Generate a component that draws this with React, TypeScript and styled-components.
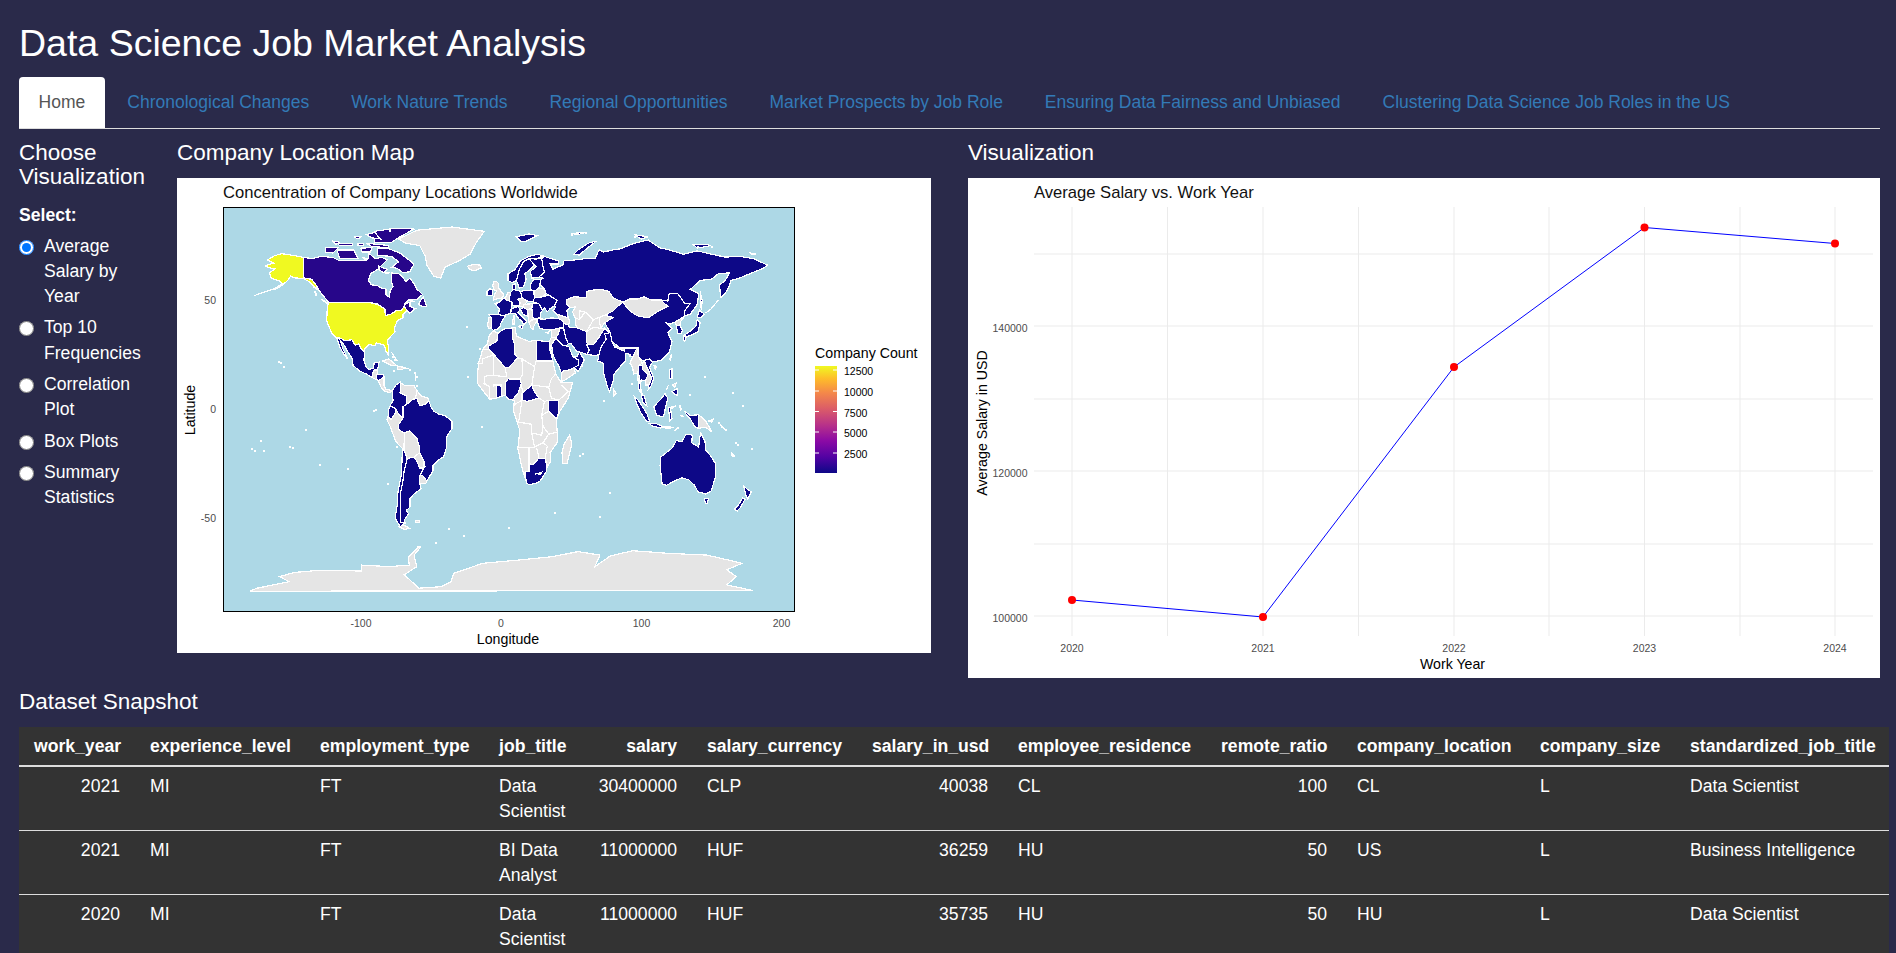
import React from "react";
import styled, { createGlobalStyle } from "styled-components";

const GlobalStyle = createGlobalStyle`
  html, body {
    margin: 0;
    height: 953px;
    overflow: hidden;
    background: #2a2a4a;
    color: #fff;
    font-family: "Liberation Sans", Arial, sans-serif;
    font-size: 17.6px;
    line-height: 25.14px;
  }
`;

const Page = styled.div`
  padding: 0 16px 0 19px;
`;

const Title = styled.h1`
  margin: 0;
  padding: 23px 0 13px;
  font-size: 37.5px;
  font-weight: 400;
  line-height: 41px;
`;

const TabBar = styled.ul`
  display: flex;
  gap: 2.8px;
  margin: 0;
  padding: 0;
  list-style: none;
  border-bottom: 1px solid #ddd;
`;

const Tab = styled.li<{ $active?: boolean }>`
  height: 51px;
  padding: 0 19.6px;
  font-size: 17.5px;
  line-height: 50px;
  border-radius: 4px 4px 0 0;
  color: ${({ $active }) => ($active ? "#555" : "#337ab7")};
  background: ${({ $active }) => ($active ? "#fff" : "transparent")};
`;

const Columns = styled.div`
  display: grid;
  grid-template-columns: 128px 761px 912px;
  gap: 30px;
  margin-top: 11px;
`;

const Heading = styled.h3`
  margin: 0 0 13px;
  padding-top: 0.5px;
  height: 24.25px;
  font-size: 22.5px;
  font-weight: 400;
  line-height: 24.75px;
`;

const SideHeading = styled(Heading)`
  height: auto;
  margin-bottom: 12.5px;
`;

const Sidebar = styled.div`
  display: flex;
  flex-direction: column;
`;

const SelectLabel = styled.div`
  font-weight: 700;
  margin-bottom: 6px;
`;

const RadioList = styled.div`
  display: flex;
  flex-direction: column;
`;

const RadioRow = styled.label`
  display: flex;
  align-items: flex-start;
  gap: 10px;
  margin-bottom: 6.4px;
`;

const RadioInput = styled.input`
  flex: none;
  width: 15px;
  height: 15px;
  margin: 6px 0 0;
`;

const PlotFrame = styled.svg`
  display: block;
  background: #fff;
`;

const PlotTitle = styled.text`
  font-size: 16.6px;
  fill: #111;
`;

const AxisTitle = styled.text`
  font-size: 14.2px;
  fill: #000;
`;

const TickLabel = styled.text`
  font-size: 10.5px;
  fill: #4d4d4d;
`;

const LegendLabel = styled.text`
  font-size: 10.5px;
  fill: #000;
`;

const Land = styled.polygon<{ $fill: string }>`
  fill: ${({ $fill }) => $fill};
  stroke: #fff;
  stroke-width: 1.2;
`;

const BorderLine = styled.polyline`
  fill: none;
  stroke: #fff;
  stroke-width: 1.2;
`;

const MapGroup = styled.g`
  shape-rendering: crispEdges;
`;

const GridLine = styled.line`
  stroke: #ebebeb;
  stroke-width: 1;
`;

const Snapshot = styled.section`
  margin-top: 11.5px;
`;

const DataTable = styled.table`
  width: 1870px;
  table-layout: fixed;
  border-collapse: collapse;
  background: #333;
`;

const HeadCell = styled.th<{ $right?: boolean }>`
  padding: 7px 15px 6px;
  font-weight: 700;
  white-space: nowrap;
  text-align: ${({ $right }) => ($right ? "right" : "left")};
  border-bottom: 2px solid #ddd;
`;

const BodyCell = styled.td<{ $right?: boolean }>`
  padding: 6.4px 15px;
  vertical-align: top;
  text-align: ${({ $right }) => ($right ? "right" : "left")};
  border-bottom: 1px solid #ddd;
`;

const NAVY = "#0d0887";
const CANADA = "#27068a";
const YELLOW = "#f0f921";
const GREY = "#e5e5e5";

// country outlines, as lon,lat pairs
const GREY_LAND = [
  "-73,78 -60,82 -35,83.5 -12,81.5 -18,76 -22,71 -30,68 -40,65 -43,60 -48,61 -53,66 -54,70 -58,75 -68,76",
  "-24,65.5 -20,66.3 -15,66 -14,64.7 -19,63.4 -22.5,64",
  "-179.3,-83.6 -174,-82.2 -151,-79.2 -158,-76.9 -147.6,-75 -130,-74 -99.5,-74.3 -99.5,-71.6 -80,-72.3 -65.5,-71.6 -66,-68 -60,-64 -57,-63 -62,-67 -61,-70 -60,-72.3 -69,-76 -58.6,-82.2 -42.8,-81.5 -35.7,-79.2 -33.8,-75.4 -13,-70.8 12,-69.3 37,-67.7 55,-65.4 70.6,-67 67,-72.3 78,-67.4 94,-65 118.8,-66.2 147,-67 172,-70.8 161,-73.8 168,-76.9 161,-80.7 180,-83.3",
  "-6,35.7 -2,35 3,36.9 10,37.3 11,33.5 15,32.3 20,31 25,31.5 32,31 34.5,31 37,22 39,16 43,12 51,12 48,5 42,-1 39.5,-5 40.5,-15 35,-20 35.5,-24 32.8,-26.8 28,-33 20,-34.8 18.3,-34 15,-27 12,-18 13.5,-10 9,-1 9.5,4 5.5,4.5 3,6.4 -3,5 -8,4.5 -13,8.5 -17,12 -17,15 -16,21 -13,27.5 -9.5,30 -9,33",
  "49,-12 50.5,-16 47,-25 44,-25 43.5,-20 45,-16",
  "-92,14.5 -91,17.8 -88,18 -88,16 -83.5,15 -83.5,11 -82,9 -77.5,8.5 -79.5,7.5 -83,8.2 -85.5,10 -87.5,13",
  "-72,12 -68,10.6 -62,10.7 -60,8.5 -61,5 -64,4 -67.5,2 -67.5,6 -72,7.5",
  "-60,8.5 -57,6 -52,5 -51.5,4 -54,2.2 -58,1.5 -60,5 -61,5",
  "-80.5,-3.3 -78.5,-4.8 -75.5,-2 -75,0 -73,-2.4 -70,-4.2 -73,-7 -73,-9.5 -69,-11 -69,-15 -70,-18.3 -75,-15 -79,-8 -81.3,-5",
  "-69,-11 -65,-10 -60,-13.5 -58,-18 -58,-20 -62,-22 -67,-22.8 -69,-19 -69,-15",
  "-62,-22 -58,-20 -55,-24 -55,-27 -58,-27 -60,-24",
  "-58,-34 -53.5,-34 -53,-33 -56,-30.5 -58,-30.5",
  "-70,-53 -65,-54.8 -69,-55.2 -73,-54",
  "-61,-51.3 -58,-51.3 -58,-52 -61,-52",
  "-84.5,22 -80,23 -74.5,20 -78,20",
  "-74,19.8 -68.5,18.8 -71,18 -74,18",
  "-5.5,50 -3,50.5 1.3,51 1.7,52.7 0,54 -2,56 -2,57.7 -3.5,58.6 -5.2,58.5 -6,56.5 -5,54.8 -3,54 -4.5,53 -5,51.7",
  "-7,37.2 -7,42 -8.8,42 -9.5,38.7 -8.9,37",
  "2.5,51 4,52 5,53.4 7,53.5 6,51 6.2,49.5 4,50",
  "12,50.3 15,51 19,49.5 17,48 16,47 9.5,47 13,47.5 13.8,48.7",
  "16,48 22.5,48.3 22,46 18.5,45.7 16,46.5",
  "8.2,41 9.7,41 9.6,39 8.4,39",
  "24,51 23.5,53.9 27,55.5 31,55 32,53 30,51.5",
  "19,45.5 22,46 22.5,44 23,41.3 20,40 19.5,42",
  "20,40 23,41 26,41 23.5,38 23,36.5 21.5,37",
  "47,48 46.5,50 52,51.5 61,51 61,54 70,55 77,54 80,51 87,49 83,47 80,45 74,43 70,42 66,41 60,44.5 56,45 56,41 53,41.8 51,44.5 53,46.8 49,46.5",
  "53,41.8 56,41 56,45 60,44.5 66,41 70,42 74,43 80,42 74,39.5 71,37 66,37.5 61,35.5 54,37.3 53,39",
  "87,49 92,50.5 98,50.5 102,51.5 107,50 114,50 119,47 112,44.8 105,41.8 97,42.8 91,45.5",
  "36,36.2 42,37.2 41,34.5 39,32.5 36,33",
  "34.5,31 36,33 39,32.5 36,29.5 35,29",
  "40,43.5 48,41.8 49,40 48,38.5 44.5,39.5 41.5,41.5",
  "43,16.7 45,17.5 49,18 52,19 53,16.5 45,13 43,12.7",
  "61,35.5 66,37.5 71,37 74,37 70,33 66,29.5 61,29.5 61,31",
  "80,29 88,28 88,26.5 81,28.5",
  "80,9.5 82,7 80.5,6",
  "92,21 94,24 97,28 98,24 101,21 98,20 97.8,17 99,14 98,10 97.5,16.5 94.5,16 94,19",
  "101,21 102,22.3 105,18 107.5,14 105.5,11 103,11 103,13 105,16 101,18",
  "124.5,40 131,42.7 128,40 127.5,38.5 125,38",
  "141,-2.6 146,-5.5 150.5,-10.5 146,-8.5 143,-8.5 141,-9",
  "120.5,23 121.5,25 121,22",
  "164,-20 167,-22 165,-21.5",
  "109,20 111,19.5 110,18.2",
  "32.5,35 34.5,35.5 33.5,34.6",
  "8.6,43 9.5,43 9.3,41.5",
  "117.5,8.5 119.5,11 118.5,9.5",
  "122,11 125,12 124,10",
  "124,-10 127,-8.5 125,-9",
  "115,-8.2 119,-8.2 123,-8.4 119,-9",
  "127.5,2 128.5,0 128,-1",
  "128,-3 130.5,-3.5 129,-3.5",
  "148,-5.5 152,-4.5 150,-6",
  "155,-6 157,-7.5 160,-9.5 158,-8",
];

const NAVY_LAND = [
  "-117.2,32.6 -114.8,32.5 -111,31.3 -106.5,31.8 -104,29.3 -101.5,29.8 -99.5,27.5 -97.2,26 -97.8,22.5 -96,19 -94,18.2 -91,18.7 -90.5,21 -87,21.5 -88,18 -91,17.8 -92,14.5 -96,16 -101,17.5 -105.5,20 -106,23 -109,26 -112.5,30 -114.5,31.2 -113,28 -110,24 -109.5,23 -112,25 -115,28.5",
  "-89,15.5 -88,15.9 -84,15.8 -83.3,15 -85,14 -87.5,13 -89,14",
  "-77.5,8.5 -75,11 -71.5,12.4 -72,7.5 -67.5,6 -67.5,2 -70,1 -70,-4.2 -73,-2.4 -75,0 -79,1.5 -77,4",
  "-79,1.5 -75,0 -75.5,-2 -78.5,-4.8 -80.5,-3.3 -80,0",
  "-70,-4.2 -70,1 -67.5,2 -64,4 -60,5 -58,1.5 -54,2.2 -51.5,4 -50,1 -48,-1 -44,-2.5 -40,-3 -35,-5.5 -35,-9 -39,-13 -39,-18 -41,-22 -45,-23.5 -48.5,-26 -48.5,-28.5 -53,-33 -56,-30.5 -58,-30.5 -55,-27 -55,-24 -58,-20 -58,-18 -60,-13.5 -65,-10 -69,-11 -73,-9.5 -73,-7",
  "-67,-22.8 -62,-22 -60,-24 -58,-27 -55,-27 -54,-26 -58,-30.5 -58,-34 -57,-36.5 -62,-39 -65,-41 -65,-45 -67.5,-46.5 -66,-48 -69,-51 -68.5,-52.3 -72,-52 -72,-49 -71.5,-44 -71.5,-38 -70,-33 -69,-28",
  "-69,-19 -70.3,-18.3 -71,-30 -73.5,-38 -74,-44 -75.5,-50 -72,-54 -68.5,-52.3 -72,-52 -72,-49 -71.5,-44 -71.5,-38 -70,-33 -69,-28 -67,-22.8",
  "11,79 20,80.3 26,79.5 18,77 14,77",
  "52,71 55,73 62,76 68,77 60,73 56,70.6",
  "5,59 5,62 10,64 14,68 20,70 26,71 31,70 28,69.7 25,68.8 20,69 16,67.5 13,64 12,61 11,59 8,58",
  "11,59 12,61 13,64 16,67.5 20,69 24,66 21,64 17,62 18,59.5 16,56 13,55.5",
  "20,69 25,68.8 29,69 30,65 31,62.7 27,60.5 22,60 21,63 25,65.5 24,66",
  "-10,52 -10,54 -8,55.3 -6,54.5 -6,52.2",
  "-4.5,48.5 -1.5,48.7 1.5,50.9 4,50 8,49 7.5,47.5 7,44 3.5,43.2 3,42.5 -1.8,43.4 -1.2,46",
  "-9,43.5 -1.8,43.4 3,42.5 0,39.5 -0.5,38 -2,36.8 -5.5,36 -7,37.2 -7,42",
  "6,51 7,53.5 8.8,54.9 10,54.7 14,54 15,51 12,50.3 13.8,48.7 13,47.5 8,47.6 8,49 6.2,49.5",
  "8.2,55 8.5,57 10.5,57.7 10.5,55",
  "14,54 19,54.5 23,54.3 24,51 22.7,49.2 19,49.5 15,51",
  "7,44 7.5,46 12,47 13.7,45.7 12.3,44.3 16,41.8 18.5,40 16.5,39 16,38 15.5,40 12.5,41.5 10,44",
  "12.5,38 15.5,38.2 15,36.8",
  "22.7,49.2 24,51 30,51.5 34,52.3 40,49.8 38,47.2 35,46 33,44.6 31,46.5 29.5,45.3 27,48.3",
  "21,55.2 21,57.4 23.5,59.3 28,59.4 27.8,57 27,55.5 23.5,53.9",
  "22,46 22.5,48.3 27,48.3 29.5,45.3 28,43.5 28,41.8 23,41.3 22.5,44",
  "13.7,45.7 16,46.5 19,45.5 19,42.6 16,43.3",
  "26,40 26.5,42 28,41.3 31,41.2 36,41.8 41.5,41.5 44.8,39.8 44.5,37.2 42,37.2 36,36.2 30.5,36.5 27.5,37",
  "28,59.4 27.8,57 31,55 32,53 34,52.3 40,49.8 38,47.2 39,46.8 37,45 40,43.5 48,41.8 47,45 49,46.5 47,48 46.5,50 52,51.5 61,51 61,54 70,55 77,54 80,51 87,49 92,50.5 98,50.5 102,51.5 107,50 114,50 119,49.5 120,53 126,53 131,48.5 135,48.5 131,45 131,42.7 135,43.5 140,48 141,53 135,54.8 142,59 150,59.5 155,62 163,62.5 160,59 156,57 156.5,51 160,53 162.5,56 164,59 170,60 179,62.5 187,64.5 190,66 180,69 170,70 160,69.7 150,71 140,72.5 130,71 120,73 113,74 105,77.5 95,76 85,73.5 80,73 73,72 70,73 67,69 60,69 55,68.5 45,68 44,66 40,65 37,64 35,66.5 41,66.5 41,68 33,69.5 31,70 29,69 30,65 31,62.7 27,60.5 30,60",
  "142,54 143.5,50 143,46 142,47 142,52",
  "137,75.5 145,75.5 150,75 140,73.8",
  "95,80 105,79 100,78",
  "50,80.5 60,81 55,80",
  "178,71.5 182,71 179,70.8",
  "74,39.5 80,42 74,43 80,45 83,47 87,49 91,45.5 97,42.8 105,41.8 112,44.8 119,47 114,50 119,49.5 120,53 126,53 131,48.5 135,48.5 131,45 131,42.7 124.5,40 121,39 118,39.5 122,37 119,35 122,31 120,26 114,22.3 108,21.5 106,23 102,21.5 98,24 98,28 92,28 85,28 79,31 78,35",
  "125,38 127.5,38.5 129.5,36 128.5,34.7 126.3,34.5",
  "131,34 135,35.7 139,38 140,41 142,39.5 140.5,35.5 136,34 132,33",
  "140,42 141.5,45.5 145,43.5 143,42",
  "130,33.5 132,33 131,31 130,31.5",
  "44.5,39.5 48,38.5 49,37.5 54,37.3 61,35.5 61,31 63,27 61.5,25 57,26 54,26.5 50,30 48,30 46,33 45,36",
  "42,37.2 44.5,37.2 46,33 48,30 46.5,29 44,29.2 39,32.5 41,34.5",
  "36,29.5 39,32.5 44,29.2 46.5,29 48.5,28.5 50,26 51.5,24 55,22.5 55,20 52,19 49,18 45,17.5 43,16.7 41,20 39,22 37,25",
  "51.5,24 54,24 56,26 59.5,22.5 55,17 52,19 55,20 55,22.5",
  "61,29.5 66,29.5 70,33 74,37 77,35 75,32 71,28 70,25 67,24.5 61.5,25 63,27",
  "74,34.5 78,35 79,31 81,28.5 88,26.5 88,28 92,28 97,28 94,24 92,24 92,25 89,25.5 89,22 87,21 80,15.5 80,13 77.5,8 76,10 73,17 72.8,21 69,22 70,25 71,28 75,32",
  "102,22.3 106,23 108,21.5 106,19 109,14 107,10.5 105,9 105.5,11 107.5,14 105,18",
  "98,20 101,20 101,18 105,16 103,13 101,13 100,13.5 99.5,11 100,8 101,6.5 99,8 98,10 99,14 97.8,17",
  "100.2,6.5 102,6.3 103.5,3 104,1.4 101,3",
  "109,1 111,2.5 114,4.5 117,7 119,5 117.5,1 116,-3.5 111,-3 109.5,0",
  "95.3,5.5 98,4 104,-2 106,-5.8 104,-5.8 100,-2 97,2",
  "105.5,-6.5 110,-6.5 114.5,-7.8 114,-8.7 108,-7.8",
  "119.5,0.5 125,1.5 121,0 122,-4.5 120.5,-5.5",
  "120,18 122,18.5 122,14 120.3,14",
  "122,8 126,9.5 126,6 123.5,7",
  "131,-1 135,-3 141,-2.6 141,-9 138,-8 135,-4.5 132.5,-3",
  "114,-22 113.5,-26 115,-34.5 118,-35 124,-33 129,-31.5 134,-32.5 138,-35 140.5,-38 146,-39 150,-37.5 153,-31 153,-25 149,-21 146,-19 145.5,-15 142.5,-11 141.5,-14 141,-17.5 136,-15.5 136.5,-12 132,-11.5 129,-15 125,-14.5 122,-18 117,-20.5",
  "145,-41 148,-41 147,-43.5 146,-43.5",
  "166.5,-46 168.5,-46.8 171,-45 174,-41.5 172.5,-40.7 170,-43.5",
  "173,-35 175,-36.5 178.5,-38 176,-41.5 174.7,-39.5",
  "-2,35 3,36.9 8.5,37 8,33 9.5,30 10,25 12,23.5 5.5,19 3,19 -5,25 -8.7,27.5 -8.7,29 -3,31",
  "25,31.5 32,31 34.5,31 34.5,28 37,22 25,22",
  "3,6.4 3,12 5,13.8 13.5,13.7 14.5,11.5 12,7 8.5,4.5 5.5,4.5",
  "-3,5 -3,11 0,11 0.5,6",
  "14.5,7 15,4 19,3.5 27,5 23,9 22,11 15.5,7.5",
  "34,4 41,4 41,-1.7 39.5,-4.6 34,-1",
  "17,-29 20,-28.5 20,-25 23,-25.5 27,-22.5 31.5,-22.5 32.8,-26.8 32.5,-28.5 28,-33 25,-34 20,-34.8 18.3,-34",
];

const CANADA_LAND = [
  "-141,69.6 -135,69 -128,70 -120,69.5 -115,68 -108,68 -100,68 -95,68.5 -94,71.5 -90,69 -85,69.5 -81,68.5 -85,66 -87,64.5 -93,62 -94.5,59 -92.5,57 -88,56.5 -85,55.3 -82,55 -82,52.5 -79.5,51.2 -79,54.5 -77,56 -78,58.5 -78,62.4 -73,62 -70,60.5 -68,58.5 -65,60 -62,57.5 -60,55 -56,52.5 -60,50.2 -66,50 -69,48 -65,49 -65,47 -61,46 -65,44 -67,45 -69,47.3 -71,45.2 -75,45 -79,43.3 -83,42.2 -82.5,45.5 -88,48.2 -95,49 -123,49 -125,50.5 -130,54.5 -130,55 -134,58.5 -137,59 -141,60.2",
  "-80,73.5 -72,71.5 -67,69 -62,66.5 -65,63 -70,62.5 -74,64.5 -78,65 -73,67.5 -78,70 -88,70.5 -88,73.5",
  "-117,73 -105,73 -102,69 -115,69",
  "-125,74 -116,74 -120,71.5 -125,72",
  "-90,76.5 -78,76.5 -72,79 -62,82.5 -75,83 -90,81.5 -90,78",
  "-96,76 -80,75 -80,74 -92,74.5",
  "-96,80 -90,81 -86,78 -92,78.5",
  "-117,76 -106,76 -106,74.8 -115,75",
  "-100,73.8 -92,74 -93,72 -99,72",
  "-87,65.5 -81,64 -84,62.5 -87,64",
  "-59,48 -55.5,51.5 -53,47 -56,47",
  "-128,50.5 -123.5,48.5 -125,48.7",
  "-120,77 -115,76.5 -118,75.5",
  "-102,76 -98,76 -98,74.8 -102,75",
  "-105,79 -100,79 -102,78",
  "-99,69.5 -96,69 -97,68.5",
  "-83,63 -80,62.5 -82,62",
  "-64,49.7 -61.5,49.2 -63,49.2",
  "-133,54 -131.5,53 -132,52",
];

const YELLOW_LAND = [
  "-141,69.6 -148,70.4 -156.5,71.3 -162,70.2 -166.5,68.4 -162,66.8 -165,66.4 -168,65.6 -164,64.5 -161,64.5 -165,62.5 -164.5,60.5 -162,59.5 -158,58.7 -156,57.5 -160,55.8 -164,54.7 -160,55.2 -156,56.8 -153,58.5 -151.5,59.5 -150,61 -148,60.2 -144,60 -141,59.8 -137,58.5 -134,56.5 -130.5,55 -132,57 -135,59.5 -141,60.2",
  "-123,49 -95,49 -88,48 -83,46 -82.5,43 -79,43.3 -75,45 -71,45.2 -69,47.3 -67,45 -70,43.5 -70,41.7 -74,40.6 -76,37 -75.5,35.3 -78,33.8 -81,31.5 -80,27 -80.5,25 -82,26.5 -83,29.2 -85,29.7 -89,30.3 -90,29 -94,29.6 -97.3,27.5 -97.2,26 -99.5,27.5 -101.5,29.8 -104,29.3 -106.5,31.8 -111,31.3 -114.8,32.5 -117.2,32.6 -120.5,34.5 -122.5,37.5 -124.3,40.3 -124,46",
];

const BORDERS = [
  "-13,27.5 -8.7,27.5",
  "-17,21 -13,21 -13,23 -5,25",
  "-5,25 -5.5,15.5 -12,15 -12,12 -8,10 -8,4.5",
  "3,19 4,15 0,15 -5.5,15.5",
  "-3,11 -5.5,11 -5.5,10",
  "-13,12 -8,10",
  "12,23.5 15,23 15.5,16 13.5,13.7",
  "15,23 24,19.5 25,22",
  "24,19.5 22,11",
  "22,11 34,10 36,14 39,16",
  "27,5 31,3.5 34,4",
  "34,10 36,5 41,4 48,8 43,11",
  "14.5,11.5 15.5,7.5 15,4 9.5,2",
  "15,4 13,-4.5 12,-6 22,-7 22,-11 29,-12 30,-8 29,-3 31,3.5",
  "29,-3 34,-1",
  "30,-8 34,-11.5 40.5,-10.5",
  "13.5,-6 22,-7",
  "12,-17.5 24,-17.5 22,-11",
  "20,-18 20,-28.5",
  "24,-17.5 30,-15.5 34,-11.5",
  "33,-26 31.5,-22.5 33,-17 30,-15.5",
  "27,-22.5 25.5,-18",
  "66,41 61,35.5",
  "70,42 71,37",
  "60,44.5 56,41",
  "-176,52 -165,54.5 -160,55.2",
  "-134,56 -130,54.5",
  "24,-30 29,-29 28,-30 27,-30 28,-29.5",
  "146,44 150,46 155,50",
  "-78,26 -76,24 -74,22",
  "-61.5,17 -61,15 -61,13",
  "-71,19.5 -66,18.3",
];

// little islands that come out as specks of outline
const SPECKS = [
  [-157.6, 21.7], [-155.5, 19.6], [-159, 22], [-149, -17.5], [-172, -14], [-170, -19], [-151, -17], [-140, -9],
  [-176, -19], [-178, -18], [178, -18], [168, -16], [160, -9], [157, -8], [167, -15], [145, 15], [-91, -0.5],
  [-78, 24.5], [-76, 23], [-77, 18], [-66, 18.2], [-61, 15], [-61, 11], [-25, 38], [-16, 28], [-24, 15], [-14, -8],
  [-38, -54.5], [-27, -58], [70, -49], [57, 20], [57.5, -20], [55.5, -21], [73, 4], [92.5, 12], [134, 7], [172, 2],
  [165, 8], [150, -5], [155, -6], [-80, 82], [60, 81], [50, 80.5], [95, 79.5], [140, 75], [150, 75], [178, 71.5],
  [-75, -17], [-81, -34], [-110, -27], [-130, -25], [-90, 0], [-60, -63], [-47, -61], [5, -54], [38, -47], [77, -38],
];

const project = (pair: string | number[]) => {
  const [lon, lat] = typeof pair === "string" ? pair.split(",").map(Number) : pair;
  return `${(324 + 1.402 * lon).toFixed(1)},${(231 - 2.18 * lat).toFixed(1)}`;
};

const projectAll = (shape: string) => shape.split(" ").map(project).join(" ");

const LandLayer = ({ shapes, fill }: { shapes: string[]; fill: string }) => (
  <>
    {shapes.map((shape, i) => (
      <Land key={i} $fill={fill} points={projectAll(shape)} />
    ))}
  </>
);

const LocationMap = () => (
  <PlotFrame width={754} height={475}>
    <defs>
      <linearGradient id="plasma" x1="0" y1="1" x2="0" y2="0">
        <stop offset="0" stopColor="#0d0887" />
        <stop offset="0.15" stopColor="#5302a3" />
        <stop offset="0.3" stopColor="#8b0aa5" />
        <stop offset="0.45" stopColor="#b83289" />
        <stop offset="0.6" stopColor="#db5c68" />
        <stop offset="0.75" stopColor="#f48849" />
        <stop offset="0.88" stopColor="#febc2a" />
        <stop offset="1" stopColor="#f0f921" />
      </linearGradient>
      <clipPath id="plot-area">
        <rect x={46} y={29} width={571} height={404} />
      </clipPath>
    </defs>
    <PlotTitle x={46} y={14} dominantBaseline="central">
      Concentration of Company Locations Worldwide
    </PlotTitle>
    <rect x={46} y={29} width={571} height={404} fill="#add8e6" />
    <MapGroup clipPath="url(#plot-area)">
      <LandLayer shapes={GREY_LAND} fill={GREY} />
      <LandLayer shapes={NAVY_LAND} fill={NAVY} />
      <LandLayer shapes={CANADA_LAND} fill={CANADA} />
      <LandLayer shapes={YELLOW_LAND} fill={YELLOW} />
      {BORDERS.map((line, i) => (
        <BorderLine key={i} points={projectAll(line)} />
      ))}
      {SPECKS.map((pair, i) => {
        const [x, y] = project(pair).split(",").map(Number);
        return <rect key={i} x={x} y={y} width={2} height={2} fill="#fff" />;
      })}
    </MapGroup>
    <rect x={46.5} y={29.5} width={571} height={404} fill="none" stroke="#000" strokeWidth={1} />
    {[
      ["50", 122],
      ["0", 231],
      ["-50", 340],
    ].map(([label, y]) => (
      <TickLabel key={label} x={39} y={y} textAnchor="end" dominantBaseline="central">
        {label}
      </TickLabel>
    ))}
    {[
      ["-100", 184],
      ["0", 324],
      ["100", 464.5],
      ["200", 604.5],
    ].map(([label, x]) => (
      <TickLabel key={label} x={x} y={445} textAnchor="middle" dominantBaseline="central">
        {label}
      </TickLabel>
    ))}
    <AxisTitle x={331} y={461} textAnchor="middle" dominantBaseline="central">
      Longitude
    </AxisTitle>
    <AxisTitle transform="translate(13 232) rotate(-90)" textAnchor="middle" dominantBaseline="central">
      Latitude
    </AxisTitle>
    <AxisTitle x={638} y={175} dominantBaseline="central">
      Company Count
    </AxisTitle>
    <rect x={638} y={188} width={22} height={107} fill="url(#plasma)" />
    {[
      ["12500", 192],
      ["10000", 213],
      ["7500", 233.5],
      ["5000", 254],
      ["2500", 275],
    ].map(([label, y]) => (
      <React.Fragment key={label}>
        <line x1={638} x2={642} y1={y} y2={y} stroke="#fff" />
        <line x1={656} x2={660} y1={y} y2={y} stroke="#fff" />
        <LegendLabel x={667} y={Number(y) + 1} dominantBaseline="central">
          {label}
        </LegendLabel>
      </React.Fragment>
    ))}
  </PlotFrame>
);

// pixel places inside the chart image
const YEARS = [
  { year: "2020", x: 104, y: 422 },
  { year: "2021", x: 295, y: 439 },
  { year: "2022", x: 486, y: 189 },
  { year: "2023", x: 676.5, y: 49.5 },
  { year: "2024", x: 867, y: 65.5 },
];
const H_LINES = [76, 148, 221, 293, 366, 438];
const V_MINOR = [199.5, 390.5, 581, 772];

const SalaryChart = () => (
  <PlotFrame width={912} height={500}>
    <PlotTitle x={66} y={14} dominantBaseline="central">
      Average Salary vs. Work Year
    </PlotTitle>
    {H_LINES.map((y) => (
      <GridLine key={y} x1={66} x2={905} y1={y} y2={y} />
    ))}
    {[...V_MINOR, ...YEARS.map((d) => d.x)].map((x) => (
      <GridLine key={x} x1={x} x2={x} y1={29} y2={458} />
    ))}
    <polyline
      points={YEARS.map((d) => `${d.x},${d.y}`).join(" ")}
      fill="none"
      stroke="#0000ff"
      strokeWidth={1}
    />
    {YEARS.map((d) => (
      <circle key={d.year} cx={d.x} cy={d.y} r={4} fill="#ff0000" />
    ))}
    {[
      ["140000", 149.5],
      ["120000", 294.5],
      ["100000", 439.5],
    ].map(([label, y]) => (
      <TickLabel key={label} x={59.5} y={y} textAnchor="end" dominantBaseline="central">
        {label}
      </TickLabel>
    ))}
    {YEARS.map((d) => (
      <TickLabel key={d.year} x={d.x} y={470} textAnchor="middle" dominantBaseline="central">
        {d.year}
      </TickLabel>
    ))}
    <AxisTitle x={484.5} y={486} textAnchor="middle" dominantBaseline="central">
      Work Year
    </AxisTitle>
    <AxisTitle transform="translate(13.5 245) rotate(-90)" textAnchor="middle" dominantBaseline="central">
      Average Salary in USD
    </AxisTitle>
  </PlotFrame>
);

const TABS = [
  "Home",
  "Chronological Changes",
  "Work Nature Trends",
  "Regional Opportunities",
  "Market Prospects by Job Role",
  "Ensuring Data Fairness and Unbiased",
  "Clustering Data Science Job Roles in the US",
];

const OPTIONS = ["Average Salary by Year", "Top 10 Frequencies", "Correlation Plot", "Box Plots", "Summary Statistics"];

const COLUMNS = [
  { name: "work_year", width: 116, right: true },
  { name: "experience_level", width: 170 },
  { name: "employment_type", width: 179 },
  { name: "job_title", width: 96 },
  { name: "salary", width: 112, right: true },
  { name: "salary_currency", width: 165 },
  { name: "salary_in_usd", width: 146, right: true },
  { name: "employee_residence", width: 203 },
  { name: "remote_ratio", width: 136, right: true },
  { name: "company_location", width: 183 },
  { name: "company_size", width: 150 },
  { name: "standardized_job_title", width: 214 },
];

const ROWS = [
  ["2021", "MI", "FT", "Data Scientist", "30400000", "CLP", "40038", "CL", "100", "CL", "L", "Data Scientist"],
  ["2021", "MI", "FT", "BI Data Analyst", "11000000", "HUF", "36259", "HU", "50", "US", "L", "Business Intelligence"],
  ["2020", "MI", "FT", "Data Scientist", "11000000", "HUF", "35735", "HU", "50", "HU", "L", "Data Scientist"],
];

const App = () => (
  <Page>
    <GlobalStyle />
    <Title>Data Science Job Market Analysis</Title>
    <TabBar>
      {TABS.map((tab, i) => (
        <Tab key={tab} $active={i === 0}>
          {tab}
        </Tab>
      ))}
    </TabBar>
    <Columns>
      <Sidebar>
        <SideHeading>Choose Visualization</SideHeading>
        <SelectLabel>Select:</SelectLabel>
        <RadioList>
          {OPTIONS.map((option, i) => (
            <RadioRow key={option}>
              <RadioInput type="radio" name="viz" defaultChecked={i === 0} />
              <span>{option}</span>
            </RadioRow>
          ))}
        </RadioList>
      </Sidebar>
      <div>
        <Heading>Company Location Map</Heading>
        <LocationMap />
      </div>
      <div>
        <Heading>Visualization</Heading>
        <SalaryChart />
      </div>
    </Columns>
    <Snapshot>
      <Heading>Dataset Snapshot</Heading>
      <DataTable>
        <colgroup>
          {COLUMNS.map((col) => (
            <col key={col.name} width={col.width} />
          ))}
        </colgroup>
        <thead>
          <tr>
            {COLUMNS.map((col) => (
              <HeadCell key={col.name} $right={col.right}>
                {col.name}
              </HeadCell>
            ))}
          </tr>
        </thead>
        <tbody>
          {ROWS.map((row, r) => (
            <tr key={r}>
              {row.map((cell, c) => (
                <BodyCell key={c} $right={COLUMNS[c].right}>
                  {cell}
                </BodyCell>
              ))}
            </tr>
          ))}
        </tbody>
      </DataTable>
    </Snapshot>
  </Page>
);

export default App;
